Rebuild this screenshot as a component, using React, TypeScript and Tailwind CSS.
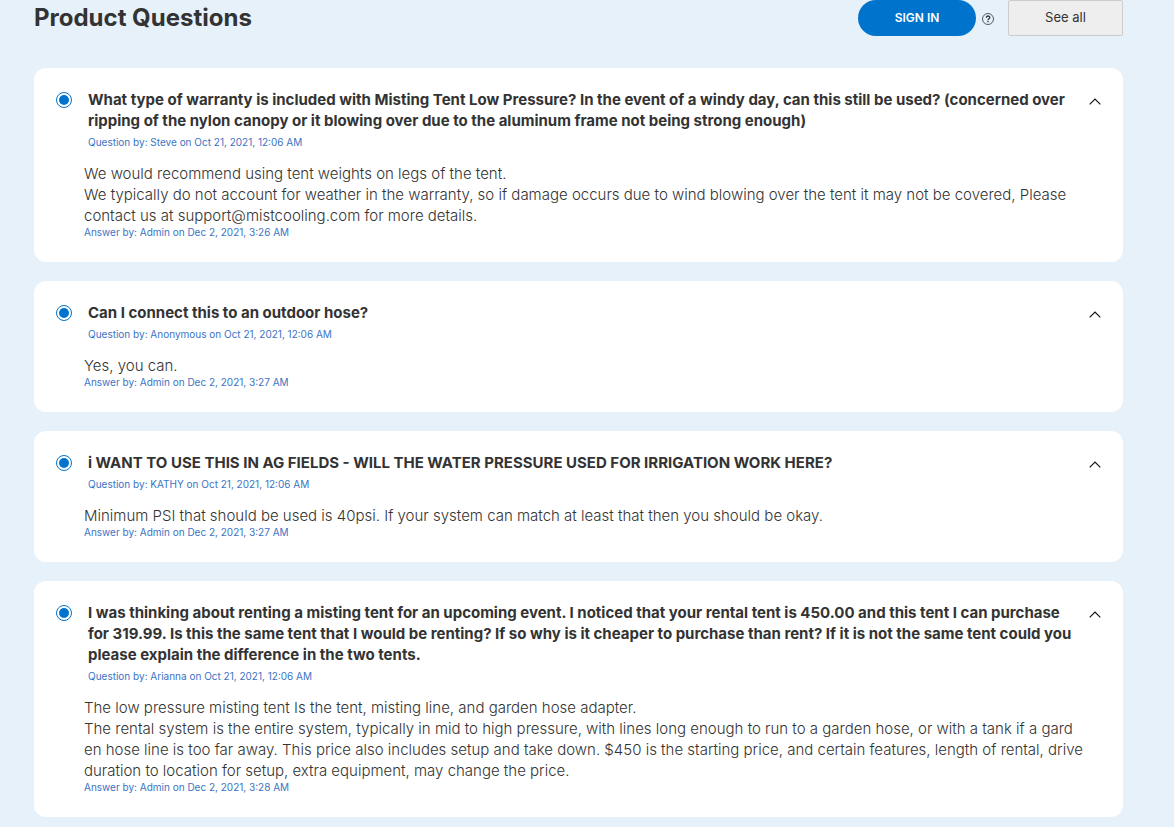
import React, { useState } from 'react';

interface Question {
    id: number;
    lines: string[];
    author: string;
    askedAt: string;
    answer: string[];
    answeredAt: string;
}

const questions: Question[] = [
    {
        id: 1,
        lines: [
            'What type of warranty is included with Misting Tent Low Pressure? In the event of a windy day, can this still be used? (concerned over',
            'ripping of the nylon canopy or it blowing over due to the aluminum frame not being strong enough)',
        ],
        author: 'Steve',
        askedAt: 'Oct 21, 2021, 12:06 AM',
        answer: [
            'We would recommend using tent weights on legs of the tent.',
            'We typically do not account for weather in the warranty, so if damage occurs due to wind blowing over the tent it may not be covered, Please',
            'contact us at support@mistcooling.com for more details.',
        ],
        answeredAt: 'Dec 2, 2021, 3:26 AM',
    },
    {
        id: 2,
        lines: ['Can I connect this to an outdoor hose?'],
        author: 'Anonymous',
        askedAt: 'Oct 21, 2021, 12:06 AM',
        answer: ['Yes, you can.'],
        answeredAt: 'Dec 2, 2021, 3:27 AM',
    },
    {
        id: 3,
        lines: ['i WANT TO USE THIS IN AG FIELDS - WILL THE WATER PRESSURE USED FOR IRRIGATION WORK HERE?'],
        author: 'KATHY',
        askedAt: 'Oct 21, 2021, 12:06 AM',
        answer: ['Minimum PSI that should be used is 40psi. If your system can match at least that then you should be okay.'],
        answeredAt: 'Dec 2, 2021, 3:27 AM',
    },
    {
        id: 4,
        lines: [
            'I was thinking about renting a misting tent for an upcoming event. I noticed that your rental tent is 450.00 and this tent I can purchase',
            'for 319.99. Is this the same tent that I would be renting? If so why is it cheaper to purchase than rent? If it is not the same tent could you',
            'please explain the difference in the two tents.',
        ],
        author: 'Arianna',
        askedAt: 'Oct 21, 2021, 12:06 AM',
        answer: [
            'The low pressure misting tent Is the tent, misting line, and garden hose adapter.',
            'The rental system is the entire system, typically in mid to high pressure, with lines long enough to run to a garden hose, or with a tank if a gard',
            'en hose line is too far away. This price also includes setup and take down. $450 is the starting price, and certain features, length of rental, drive',
            'duration to location for setup, extra equipment, may change the price.',
        ],
        answeredAt: 'Dec 2, 2021, 3:28 AM',
    },
];

function QuestionCard({ question }: { question: Question }) {
    const [open, setOpen] = useState(true);
    const inputId = `question-${question.id}`;

    return (
        <article className="rounded-xl bg-white px-[22px] pt-[21px] pb-6">
            <div className="flex items-start">
                <input
                    type="radio"
                    id={inputId}
                    name={inputId}
                    defaultChecked
                    className="mt-[3px] size-4 shrink-0 appearance-none rounded-full border border-[#0074cc] bg-white bg-clip-content p-0.5 checked:bg-[#0074cc]"
                />
                <div className="ml-4 min-w-0 flex-1">
                    <label htmlFor={inputId} className="block text-[15px]/[21px] font-bold whitespace-pre-line">
                        {question.lines.join('\n')}
                    </label>
                    <p className="mt-px text-[10px]/5 text-[#3b73c5]">
                        Question by: {question.author} on {question.askedAt}
                    </p>
                </div>
                <button
                    type="button"
                    aria-label="Toggle answer"
                    aria-expanded={open}
                    onClick={() => setOpen(!open)}
                    className="mt-1 flex w-3 h-4 shrink-0 items-center justify-center"
                >
                    <svg
                        viewBox="0 0 12 7"
                        className={open ? 'h-[7px] w-3' : 'h-[7px] w-3 rotate-180'}
                        fill="none"
                        stroke="#111"
                        strokeWidth="1.2"
                    >
                        <path d="M.7 6.3 6 1l5.3 5.3" />
                    </svg>
                </button>
            </div>

            {open && (
                <div className="mt-[11px] -mr-3 ml-7">
                    <p className="text-[15px]/[21px] font-light whitespace-pre-line">{question.answer.join('\n')}</p>
                    <p className="text-[10px]/3 text-[#3b73c5]">Answer by: Admin on {question.answeredAt}</p>
                </div>
            )}
        </article>
    );
}

export default function App() {
    return (
        <main className="min-h-screen bg-[#e6f1fa] pr-[51px] pb-3 pl-[34px] font-['Inter',sans-serif] text-[#333]">
            <header className="flex items-start justify-between">
                <h1 className="text-2xl/9 font-bold">Product Questions</h1>
                <div className="flex items-center">
                    <button type="button" className="h-9 w-[118px] rounded-full bg-[#0074cc] text-xs font-semibold text-white">
                        SIGN IN
                    </button>
                    <button type="button" aria-label="Help" className="mx-1.5 mt-0.5">
                        <svg viewBox="0 0 12 12" className="size-3" fill="none" stroke="#333">
                            <circle cx="6" cy="6" r="5.5" strokeWidth=".8" />
                            <path d="M4.3 4.8C4.3 2.4 7.8 2.5 7.8 4.6 7.8 5.8 6 5.8 6 7.2" strokeWidth="1.3" />
                            <path d="M6 8v1.3" strokeWidth="1.3" />
                        </svg>
                    </button>
                    <button
                        type="button"
                        className="ml-2 h-9 w-[115px] rounded-xs border border-[#ccc] bg-[#eee] text-[13px]"
                    >
                        See all
                    </button>
                </div>
            </header>

            {/* Questions list */}
            <section className="mt-8 flex flex-col gap-[19px]">
                {questions.map((question) => (
                    <QuestionCard key={question.id} question={question} />
                ))}
            </section>
        </main>
    );
}
